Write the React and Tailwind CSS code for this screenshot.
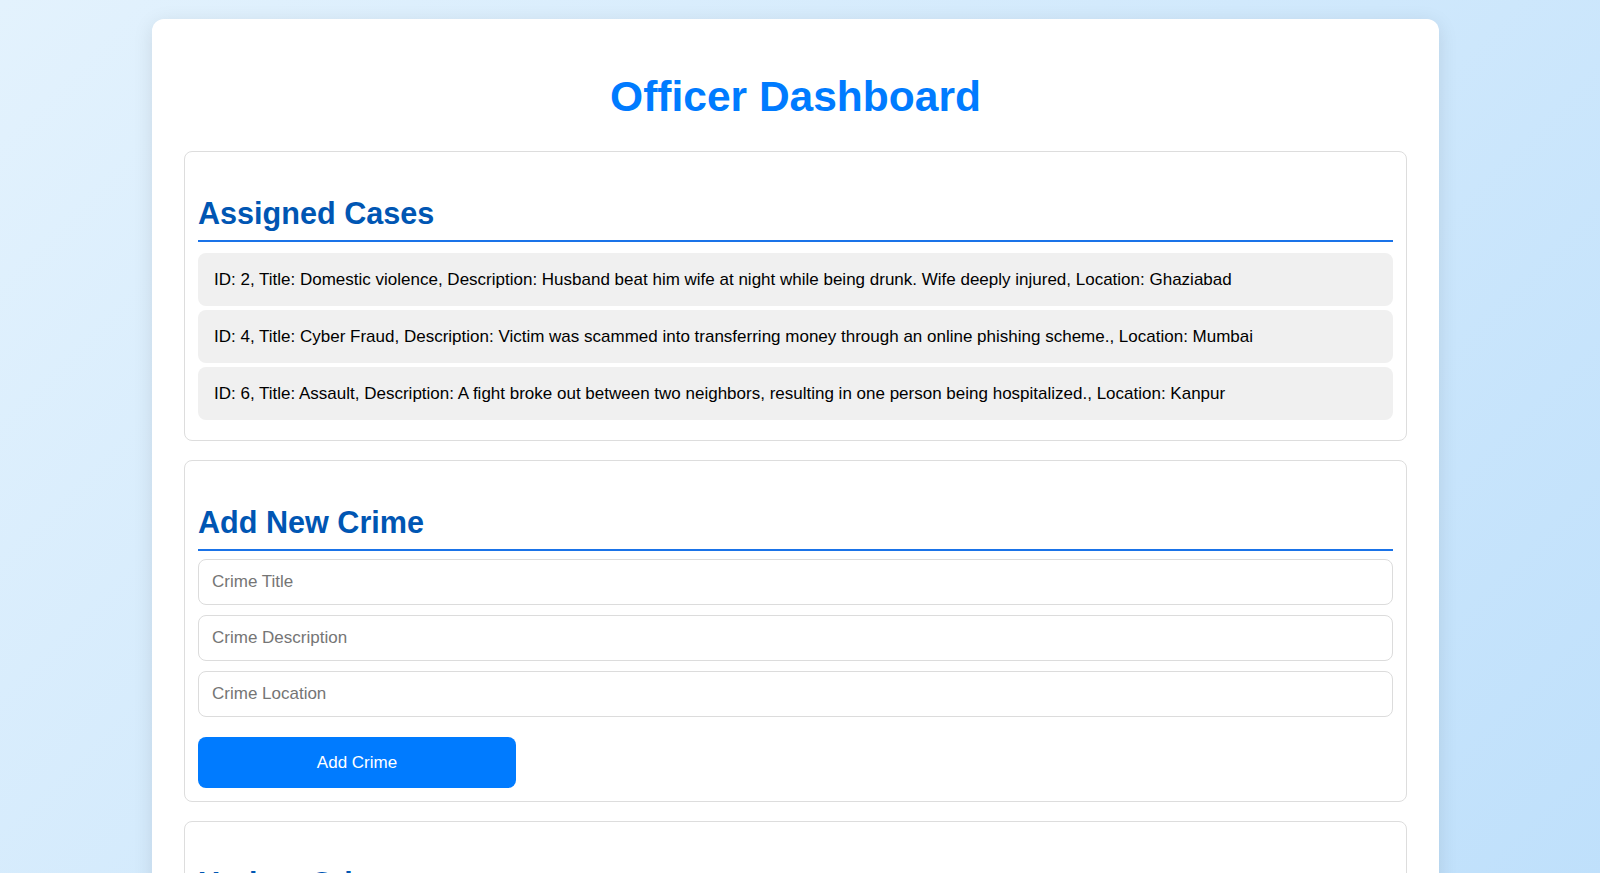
import React from "react";

const cases = [
  "ID: 2, Title: Domestic violence, Description: Husband beat him wife at night while being drunk. Wife deeply injured, Location: Ghaziabad",
  "ID: 4, Title: Cyber Fraud, Description: Victim was scammed into transferring money through an online phishing scheme., Location: Mumbai",
  "ID: 6, Title: Assault, Description: A fight broke out between two neighbors, resulting in one person being hospitalized., Location: Kanpur",
];

function SectionTitle({ children }) {
  return (
    <h2 className="mt-[23px] pb-[9px] border-b-2 border-[#1a73e8] text-[30.6px] leading-[36px] font-bold text-[#0056b3]">
      {children}
    </h2>
  );
}

function Input({ placeholder }) {
  return (
    <input
      type="text"
      placeholder={placeholder}
      className="block w-full h-[46px] px-[13px] border border-[#dcdcdc] rounded-lg text-[17px] text-black placeholder:text-[#757575] bg-white outline-none"
    />
  );
}

export default function App() {
  return (
    <div
      className="min-h-[873px] w-full bg-[linear-gradient(135deg,#e3f2fd,#bbdefb)] pt-[19px] pb-[20px]"
      style={{ fontFamily: '"Liberation Sans", Arial, Helvetica, sans-serif' }}
    >
      <div className="ml-[152px] w-[1287px] bg-white rounded-xl shadow-[0_4px_20px_rgba(0,0,0,0.1)] px-[32px] pt-[32px] pb-[32px]">
        <h1 className="mt-[22px] mb-[30px] text-center text-[42.5px] leading-[48px] font-bold text-[#007bff]">
          Officer Dashboard
        </h1>

        <div className="flex flex-col gap-[19px]">
          <section className="border border-[#dddddd] rounded-lg px-[13px] pt-[20px] pb-[20px]">
            <SectionTitle>Assigned Cases</SectionTitle>
            <ul className="mt-[11px] flex flex-col gap-[4px]">
              {cases.map((c) => (
                <li
                  key={c}
                  className="bg-[#f0f0f0] rounded-lg px-4 py-4 text-[17px] leading-[21px] text-black"
                >
                  {c}
                </li>
              ))}
            </ul>
          </section>

          <section className="border border-[#dddddd] rounded-lg px-[13px] pt-[20px] pb-[13px]">
            <SectionTitle>Add New Crime</SectionTitle>
            <div className="mt-[8px] flex flex-col gap-[10px]">
              <Input placeholder="Crime Title" />
              <Input placeholder="Crime Description" />
              <Input placeholder="Crime Location" />
            </div>
            <button className="mt-[20px] w-[318px] h-[51px] rounded-lg bg-[#007bff] text-white text-[17px] flex items-center justify-center">
              Add Crime
            </button>
          </section>

          <section className="border border-[#dddddd] rounded-lg px-[13px] pt-[20px] pb-[13px]">
            <SectionTitle>Update Crime</SectionTitle>
            <div className="mt-[8px] flex flex-col gap-[10px]">
              <Input placeholder="Crime ID" />
              <Input placeholder="New Status" />
            </div>
            <button className="mt-[20px] w-[318px] h-[51px] rounded-lg bg-[#007bff] text-white text-[17px] flex items-center justify-center">
              Update Crime
            </button>
          </section>
        </div>
      </div>
    </div>
  );
}
